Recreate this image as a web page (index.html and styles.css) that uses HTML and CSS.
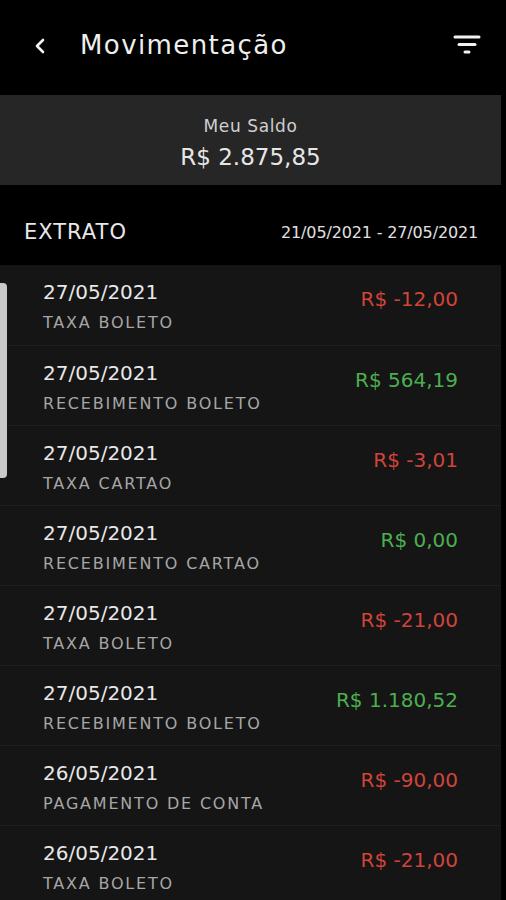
FILE: index.html
```html
<!DOCTYPE html>
<html lang="pt-BR">
<head>
<meta charset="utf-8">
<title>Movimentação</title>
<link rel="stylesheet" href="styles.css">
</head>
<body>
<div class="screen">
  <header class="topbar">
    <svg class="back" width="14" height="16" viewBox="0 0 14 16"><path d="M10 2 L4 8 L10 14" fill="none" stroke="#f2f2f2" stroke-width="2.6" stroke-linecap="round" stroke-linejoin="round"/></svg>
    <h1 class="title">Movimentação</h1>
    <svg class="filter" width="28" height="22" viewBox="0 0 28 22"><g stroke="#f2f2f2" stroke-width="3" stroke-linecap="round"><line x1="2" y1="3" x2="26" y2="3"/><line x1="6" y1="10.5" x2="22" y2="10.5"/><line x1="12" y1="18" x2="16" y2="18"/></g></svg>
  </header>
  <section class="balance">
    <div class="balance-label">Meu Saldo</div>
    <div class="balance-value">R$ 2.875,85</div>
  </section>
  <div class="statement-head">
    <span class="statement-title">EXTRATO</span>
    <span class="statement-range">21/05/2021 - 27/05/2021</span>
  </div>
  <ul class="list">
    <li class="row"><div class="info"><div class="date">27/05/2021</div><div class="desc">TAXA BOLETO</div></div><div class="amount neg">R$ -12,00</div></li>
    <li class="row"><div class="info"><div class="date">27/05/2021</div><div class="desc">RECEBIMENTO BOLETO</div></div><div class="amount pos">R$ 564,19</div></li>
    <li class="row"><div class="info"><div class="date">27/05/2021</div><div class="desc">TAXA CARTAO</div></div><div class="amount neg">R$ -3,01</div></li>
    <li class="row"><div class="info"><div class="date">27/05/2021</div><div class="desc">RECEBIMENTO CARTAO</div></div><div class="amount pos">R$ 0,00</div></li>
    <li class="row"><div class="info"><div class="date">27/05/2021</div><div class="desc">TAXA BOLETO</div></div><div class="amount neg">R$ -21,00</div></li>
    <li class="row"><div class="info"><div class="date">27/05/2021</div><div class="desc">RECEBIMENTO BOLETO</div></div><div class="amount pos">R$ 1.180,52</div></li>
    <li class="row"><div class="info"><div class="date">26/05/2021</div><div class="desc">PAGAMENTO DE CONTA</div></div><div class="amount neg">R$ -90,00</div></li>
    <li class="row"><div class="info"><div class="date">26/05/2021</div><div class="desc">TAXA BOLETO</div></div><div class="amount neg">R$ -21,00</div></li>
  </ul>
  <div class="scrollbar"></div>
</div>
</body>
</html>
```
FILE: styles.css
```css
* { box-sizing: border-box; }
html, body { margin: 0; padding: 0; background: #000; }
body { font-family: "DejaVu Sans", sans-serif; color: #ececec; }
.screen { position: relative; width: 506px; height: 900px; overflow: hidden; background: #000; }

.topbar { height: 95px; display: flex; align-items: center; padding: 0 25px 0 33px; }
.back { flex: none; margin-top: -4px; }
.title { margin: -5px 0 0 33px; font-size: 26px; font-weight: 400; letter-spacing: 1.4px; color: #eeeeee; flex: 1; }
.filter { flex: none; margin-top: -6px; }

.balance { height: 90px; margin-right: 5px; background: #262626; display: flex; flex-direction: column; align-items: center; justify-content: center; padding-top: 6px; }
.balance-label { font-size: 17px; letter-spacing: 0.6px; color: #cfcfcf; line-height: 22px; }
.balance-value { font-size: 23px; color: #e6e6e6; line-height: 30px; margin-top: 5px; }

.statement-head { height: 80px; display: flex; align-items: center; justify-content: space-between; padding: 14px 28px 0 24px; }
.statement-title { font-size: 21px; letter-spacing: 1px; color: #e8e8e8; }
.statement-range { font-size: 16px; letter-spacing: -0.15px; color: #e0e0e0; }

.list { list-style: none; margin: 0 5px 0 0; padding: 0; background: #151515; }
.row { height: 80px; display: flex; justify-content: space-between; padding: 14px 43px 0 43px; border-top: 1px solid #1f1f1f; }
.row:first-child { border-top: none; }
.date { font-size: 20px; color: #e8e8e8; line-height: 26px; }
.desc { font-size: 16px; letter-spacing: 1.8px; color: #a6a6a6; line-height: 20px; margin-top: 8px; }
.amount { font-size: 20px; line-height: 26px; margin-top: 7px; }
.neg { color: #d2433a; }
.pos { color: #4caf50; }

.scrollbar { position: absolute; left: 0; top: 283px; width: 7px; height: 195px; background: #c9c9c9; border-radius: 0 4px 4px 0; }
```
